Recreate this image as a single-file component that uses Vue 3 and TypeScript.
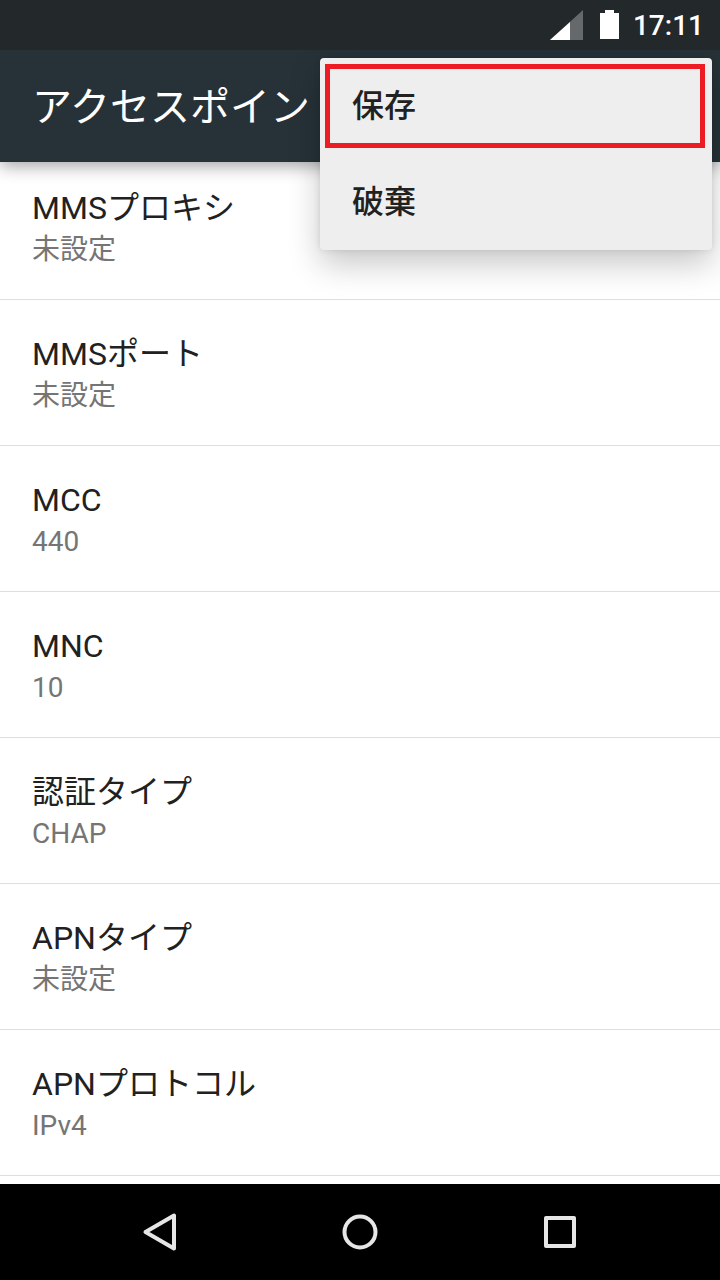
<script setup lang="ts">
interface Preference {
  title: string
  summary: string
}

const preferences: Preference[] = [
  { title: 'MMSプロキシ', summary: '未設定' },
  { title: 'MMSポート', summary: '未設定' },
  { title: 'MCC', summary: '440' },
  { title: 'MNC', summary: '10' },
  { title: '認証タイプ', summary: 'CHAP' },
  { title: 'APNタイプ', summary: '未設定' },
  { title: 'APNプロトコル', summary: 'IPv4' },
]

const menuItems: { label: string; marked: boolean }[] = [
  { label: '保存', marked: true },
  { label: '破棄', marked: false },
]
</script>

<template>
  <div class="screen">
    <div class="status-bar">
      <svg class="signal" viewBox="0 0 34 30" aria-hidden="true">
        <path d="M0 30 33 0V30Z" fill="#65696b" />
        <path d="M0 30 20 12V30Z" fill="#fff" />
      </svg>
      <svg class="battery" viewBox="0 0 19 30" aria-hidden="true">
        <path d="M5 0h9v3h5v26H0V3h5z" fill="#fff" />
      </svg>
      <time class="clock">17:11</time>
    </div>

    <header class="app-bar">
      <h1 class="app-title">アクセスポイン</h1>
      <div class="menu" role="menu">
        <button
          v-for="item in menuItems"
          :key="item.label"
          type="button"
          role="menuitem"
          class="menu-item"
          :class="{ marked: item.marked }"
        >
          {{ item.label }}
        </button>
      </div>
    </header>

    <main class="content">
      <ul class="list">
        <li v-for="pref in preferences" :key="pref.title" class="list-item">
          <button type="button" class="preference">
            <span class="title">{{ pref.title }}</span>
            <span class="summary">{{ pref.summary }}</span>
          </button>
        </li>
      </ul>
    </main>

    <nav class="nav-bar">
      <button type="button" class="nav-button" aria-label="戻る">
        <svg viewBox="0 0 48 48" fill="none" stroke="#e6e6e6" stroke-width="4" stroke-linejoin="round">
          <path d="M38 7.5V40.5L9.5 24Z" />
        </svg>
      </button>
      <button type="button" class="nav-button" aria-label="ホーム">
        <svg viewBox="0 0 48 48" fill="none" stroke="#e6e6e6" stroke-width="4">
          <circle cx="24" cy="24" r="15.5" />
        </svg>
      </button>
      <button type="button" class="nav-button" aria-label="最近使ったアプリ">
        <svg viewBox="0 0 48 48" fill="none" stroke="#e6e6e6" stroke-width="4" stroke-linejoin="round">
          <rect x="10" y="10" width="28" height="28" />
        </svg>
      </button>
    </nav>
  </div>
</template>

<style>
body {
  margin: 0;
}
</style>

<style scoped>
.screen {
  display: flex;
  flex-direction: column;
  min-height: 100vh;
  background: #fff;
  color: #212121;
  font-family: Roboto, "Noto Sans CJK JP", sans-serif;
}

button {
  margin: 0;
  padding: 0;
  border: 0;
  background: none;
  color: inherit;
  font: inherit;
  text-align: left;
}

.status-bar {
  display: flex;
  align-items: flex-end;
  justify-content: flex-end;
  box-sizing: border-box;
  height: 50px;
  padding: 0 16px 10px;
  background: #23282b;
  color: #fff;
}

.signal {
  width: 34px;
  height: 30px;
  margin-right: 16px;
}

.battery {
  width: 19px;
  height: 30px;
  margin-right: 14px;
}

.clock {
  font-size: 28px;
  font-weight: 500;
  line-height: 28px;
}

.app-bar {
  position: relative;
  z-index: 1;
  display: flex;
  align-items: center;
  box-sizing: border-box;
  height: 112px;
  padding: 4px 32px 0;
  background: #263238;
  box-shadow: 0 4px 16px rgba(0, 0, 0, 0.36);
  clip-path: inset(0 0 -160px 0);
}

.app-title {
  margin: 0;
  color: #fff;
  font-size: 40px;
  font-weight: 400;
  line-height: 48px;
}

.menu {
  position: absolute;
  top: 8px;
  right: 8px;
  display: flex;
  flex-direction: column;
  width: 392px;
  border-radius: 4px;
  background: #eee;
  box-shadow: 0 14px 32px rgba(0, 0, 0, 0.22), 0 0 6px rgba(0, 0, 0, 0.1);
}

.menu-item {
  position: relative;
  height: 96px;
  padding: 0 32px;
  font-size: 32px;
  font-weight: 500;
  line-height: 40px;
}

.marked::after {
  content: "";
  position: absolute;
  inset: 6px 7px 6px 5px;
  border: 5px solid #ed1c24;
}

.content {
  flex: 1;
  overflow: hidden;
}

/* The list is scrolled slightly under the app bar. */
.list {
  margin: -8px 0 8px;
  padding: 0;
  list-style: none;
}

.list-item {
  border-bottom: 1px solid #dedede;
}

.preference {
  display: flex;
  flex-direction: column;
  gap: 2px;
  width: 100%;
  padding: 34px 32px 29px;
}

.title {
  font-size: 32px;
  line-height: 40px;
}

.summary {
  color: #757575;
  font-size: 28px;
  line-height: 40px;
}

.nav-bar {
  display: flex;
  justify-content: center;
  height: 96px;
  padding: 0 60px;
  background: #000;
}

.nav-button {
  display: flex;
  flex: 1;
  align-items: center;
  justify-content: center;
}

.nav-button svg {
  width: 48px;
  height: 48px;
}
</style>
